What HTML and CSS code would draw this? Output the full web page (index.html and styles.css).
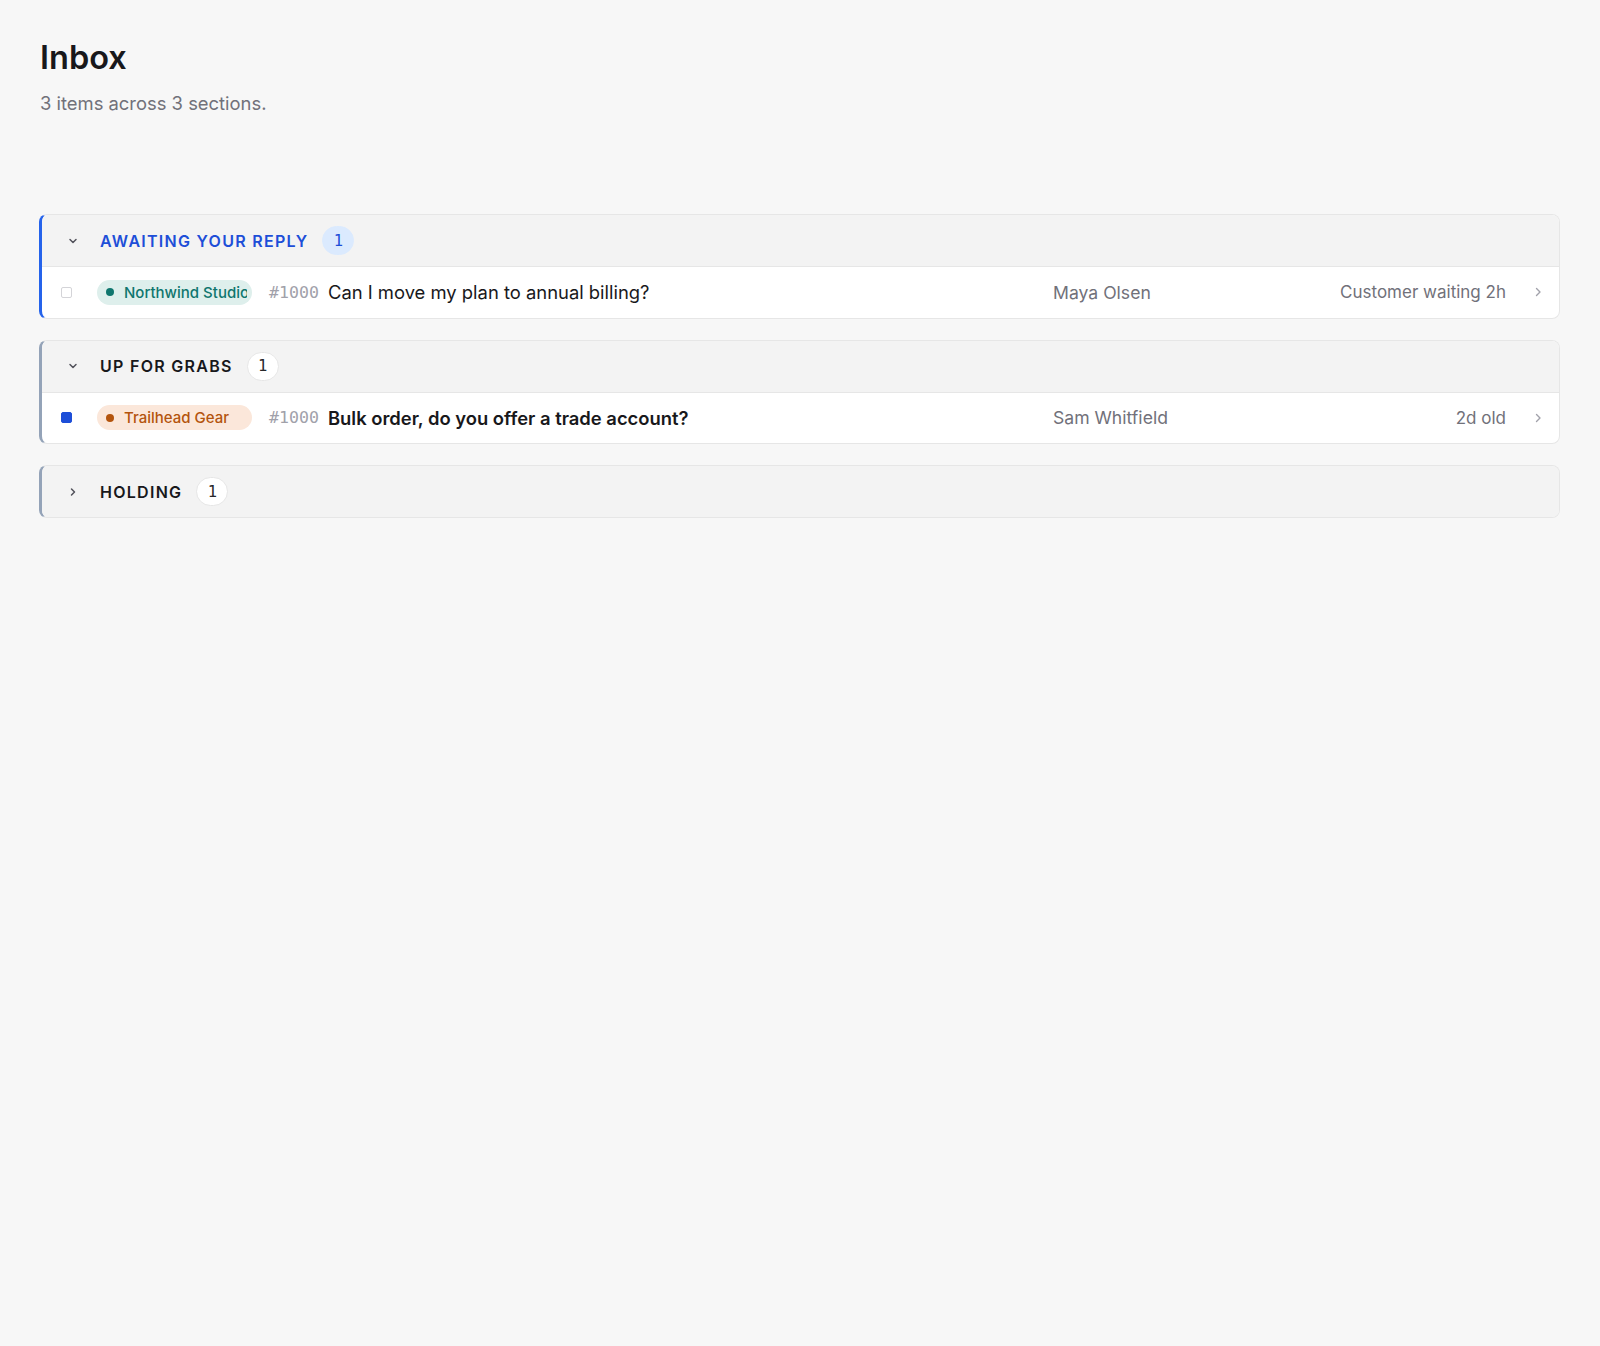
FILE: index.html
```html
<!DOCTYPE html>
<html>
<head>
    <meta charset="utf-8">
    <meta name="viewport" content="width=device-width, initial-scale=1">
    <title>Inbox</title>
    <link rel="stylesheet" href="styles.css">
</head>
<body>
    <div class="page">
        <h1>Inbox</h1>
        <p class="summary">3 items across 3 sections.</p>

        <div class="sections">
            <section class="group group-reply">
                <div class="group-head">
                    <span class="toggle">
                        <svg width="12" height="12" viewBox="0 0 12 12"><path d="M3 4.5 6 7.5 9 4.5" fill="none" stroke="currentColor" stroke-width="1.5" stroke-linecap="round" stroke-linejoin="round"/></svg>
                    </span>
                    <span class="group-title">Awaiting your reply</span>
                    <span class="count">1</span>
                </div>
                <div class="row">
                    <span class="check"></span>
                    <span class="pill pill-teal"><span class="dot"></span><span class="pill-label">Northwind Studio</span></span>
                    <span class="ticket">#1000</span>
                    <span class="subject">Can I move my plan to annual billing?</span>
                    <span class="who">Maya Olsen</span>
                    <span class="age">Customer waiting 2h</span>
                    <span class="go">
                        <svg width="10" height="12" viewBox="0 0 10 12"><path d="M3.5 2.5 7 6 3.5 9.5" fill="none" stroke="currentColor" stroke-width="1.4" stroke-linecap="round" stroke-linejoin="round"/></svg>
                    </span>
                </div>
            </section>

            <section class="group">
                <div class="group-head">
                    <span class="toggle">
                        <svg width="12" height="12" viewBox="0 0 12 12"><path d="M3 4.5 6 7.5 9 4.5" fill="none" stroke="currentColor" stroke-width="1.5" stroke-linecap="round" stroke-linejoin="round"/></svg>
                    </span>
                    <span class="group-title">Up for grabs</span>
                    <span class="count">1</span>
                </div>
                <div class="row unread">
                    <span class="check checked"></span>
                    <span class="pill pill-orange"><span class="dot"></span><span class="pill-label">Trailhead Gear</span></span>
                    <span class="ticket">#1000</span>
                    <span class="subject">Bulk order, do you offer a trade account?</span>
                    <span class="who">Sam Whitfield</span>
                    <span class="age">2d old</span>
                    <span class="go">
                        <svg width="10" height="12" viewBox="0 0 10 12"><path d="M3.5 2.5 7 6 3.5 9.5" fill="none" stroke="currentColor" stroke-width="1.4" stroke-linecap="round" stroke-linejoin="round"/></svg>
                    </span>
                </div>
            </section>

            <section class="group collapsed">
                <div class="group-head">
                    <span class="toggle">
                        <svg width="12" height="12" viewBox="0 0 12 12"><path d="M4.5 3 7.5 6 4.5 9" fill="none" stroke="currentColor" stroke-width="1.5" stroke-linecap="round" stroke-linejoin="round"/></svg>
                    </span>
                    <span class="group-title">Holding</span>
                    <span class="count">1</span>
                </div>
            </section>
        </div>
    </div>
</body>
</html>
```

FILE: styles.css
```css
body {
    margin: 0;
    background-color: #f7f7f7;
    font-family: Inter, "Noto Sans", sans-serif;
    color: #18181b;
}
.page {
    padding: 40px 40px 40px 39px;
}
h1 {
    margin: 0;
    font-size: 32.5px;
    line-height: 36px;
    font-weight: 600;
    padding-left: 1px;
}
.summary {
    margin: 14px 0 0;
    padding-left: 1px;
    font-size: 18.4px;
    line-height: 26px;
    color: #71717a;
}
.sections {
    margin-top: 98px;
    display: flex;
    flex-direction: column;
    gap: 21px;
}
.group {
    background: white;
    border: 1px solid #e6e6e6;
    border-left: 3px solid #94a3b8;
    border-radius: 8px;
    overflow: hidden;
}
.group-reply {
    border-left-color: #2563eb;
}
.group-head {
    display: flex;
    align-items: center;
    height: 51px;
    padding-left: 21px;
    background: #f3f3f3;
    border-bottom: 1px solid #e6e6e6;
}
.collapsed .group-head {
    border-bottom: none;
}
.toggle {
    width: 20px;
    height: 20px;
    display: flex;
    align-items: center;
    justify-content: center;
    color: #52525b;
    margin-right: 17px;
}
.group-title {
    font-size: 16px;
    font-weight: 600;
    text-transform: uppercase;
    letter-spacing: 0.08em;
    color: #18181b;
}
.group-reply .group-title {
    color: #1d4ed8;
}
.count {
    margin-left: 14px;
    min-width: 32px;
    height: 29px;
    box-sizing: border-box;
    padding: 0 8px;
    border-radius: 15px;
    border: 1px solid #e6e6e6;
    background: white;
    display: flex;
    align-items: center;
    justify-content: center;
    font-family: "DejaVu Sans Mono", monospace;
    font-size: 15.5px;
    font-weight: 500;
    color: #27272a;
}
.group-reply .count {
    background: #dbeafe;
    border-color: #dbeafe;
    color: #1d4ed8;
}
.row {
    display: flex;
    align-items: center;
    height: 50.5px;
    padding: 0 13px 0 19px;
}
.check {
    flex: none;
    width: 11px;
    height: 11px;
    box-sizing: border-box;
    border: 1px solid #d4d4d8;
    border-radius: 2px;
    margin-right: 25px;
}
.check.checked {
    background: #1d4ed8;
    border-color: #1d4ed8;
}
.pill {
    flex: none;
    width: 155px;
    height: 25px;
    box-sizing: border-box;
    padding: 0 5px 0 9px;
    border-radius: 13px;
    display: flex;
    align-items: center;
    font-size: 15px;
    font-weight: 500;
    margin-right: 17px;
}
.pill-label {
    flex: 1;
    min-width: 0;
    overflow: hidden;
    white-space: nowrap;
}
.dot {
    flex: none;
    width: 8px;
    height: 8px;
    border-radius: 50%;
    background: currentColor;
    margin-right: 10px;
}
.pill-teal {
    background: #deefec;
    color: #0f766e;
}
.pill-orange {
    background: #fbe7da;
    color: #b4540d;
}
.ticket {
    flex: none;
    font-family: "DejaVu Sans Mono", monospace;
    font-size: 16.6px;
    color: #a1a1aa;
    margin-right: 9px;
}
.subject {
    flex: 1;
    min-width: 0;
    font-size: 18.4px;
    white-space: nowrap;
    overflow: hidden;
    text-overflow: ellipsis;
}
.unread .subject {
    font-weight: 600;
}
.who {
    flex: none;
    width: 240px;
    font-size: 17.6px;
    color: #71717a;
}
.age {
    flex: none;
    width: 213px;
    text-align: right;
    font-size: 17px;
    color: #71717a;
}
.go {
    flex: none;
    width: 16px;
    margin-left: 24px;
    display: flex;
    justify-content: center;
    color: #a1a1aa;
}
```
